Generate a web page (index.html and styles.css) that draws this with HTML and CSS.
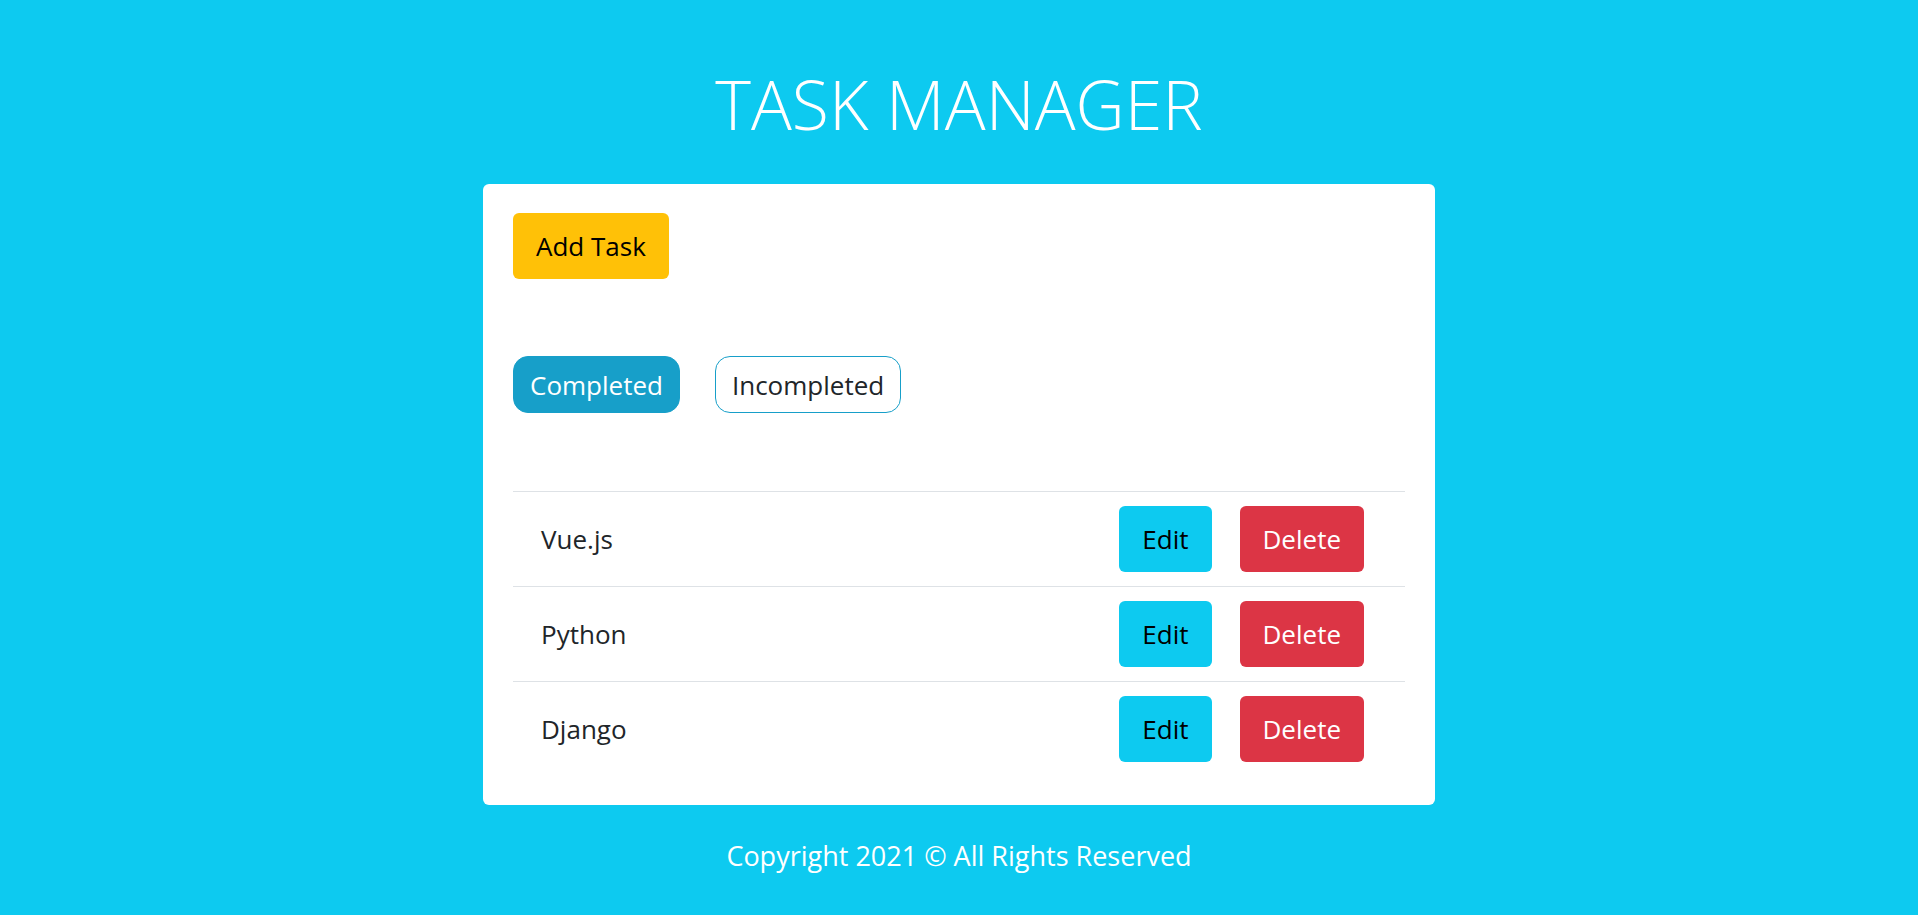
FILE: index.html
```html
<!DOCTYPE html>
<html lang="en">
<head>
<meta charset="utf-8">
<title>Task Manager</title>
<link rel="stylesheet" href="styles.css">
</head>
<body>
<header class="header">
  <h1 class="title">TASK MANAGER</h1>
</header>
<main class="card">
  <div class="actions">
    <button class="btn btn-warning">Add Task</button>
  </div>
  <div class="filters">
    <button class="pill pill-active">Completed</button>
    <button class="pill pill-outline">Incompleted</button>
  </div>
  <ul class="task-list">
    <li class="task">
      <span class="task-name">Vue.js</span>
      <div class="task-buttons">
        <button class="btn btn-info">Edit</button>
        <button class="btn btn-danger">Delete</button>
      </div>
    </li>
    <li class="task">
      <span class="task-name">Python</span>
      <div class="task-buttons">
        <button class="btn btn-info">Edit</button>
        <button class="btn btn-danger">Delete</button>
      </div>
    </li>
    <li class="task">
      <span class="task-name">Django</span>
      <div class="task-buttons">
        <button class="btn btn-info">Edit</button>
        <button class="btn btn-danger">Delete</button>
      </div>
    </li>
  </ul>
</main>
<footer class="footer">Copyright 2021 © All Rights Reserved</footer>
</body>
</html>
```
FILE: styles.css
```css
* { box-sizing: border-box; }

html, body {
  margin: 0;
  padding: 0;
}

body {
  background: #0dcaf0;
  font-family: "Open Sans", "Noto Sans", sans-serif;
  font-size: 26px;
  color: #212529;
  min-height: 915px;
}

.header {
  padding-top: 65px;
  display: flex;
  justify-content: center;
}

.title {
  margin: 0;
  font-size: 68px;
  line-height: 78px;
  font-weight: 350;
  color: #ffffff;
  letter-spacing: 0;
}

.card {
  width: 952px;
  margin: 41px auto 0;
  background: #ffffff;
  border-radius: 6px;
  padding: 29px 30px 29px;
}

.actions {
  display: flex;
}

.btn {
  font-family: inherit;
  font-size: 26px;
  line-height: 40px;
  height: 66px;
  padding: 0 22px;
  border: 1px solid transparent;
  border-radius: 6px;
  cursor: pointer;
}

.btn-warning {
  background: #ffc107;
  color: #000000;
}

.btn-info {
  background: #0dcaf0;
  color: #000000;
}

.btn-danger {
  background: #dc3545;
  color: #ffffff;
}

.filters {
  display: flex;
  gap: 35px;
  margin-top: 77px;
}

.pill {
  font-family: inherit;
  font-size: 26px;
  line-height: 40px;
  height: 57px;
  padding: 0 16px;
  border-radius: 15px;
  border: 1px solid #179fc9;
  cursor: pointer;
}

.pill-active {
  background: #179fc9;
  color: #ffffff;
}

.pill-outline {
  background: #ffffff;
  color: #212529;
}

.task-list {
  list-style: none;
  margin: 78px 0 0;
  padding: 0;
}

.task {
  display: flex;
  align-items: center;
  justify-content: space-between;
  border-top: 1px solid #dee2e6;
  padding: 14px 41px 14px 28px;
  height: 95px;
}

.task-name {
  font-size: 26px;
}

.task-buttons {
  display: flex;
  gap: 28px;
}

.footer {
  text-align: center;
  color: #ffffff;
  font-size: 27px;
  line-height: 39px;
  padding-top: 31px;
}
```
